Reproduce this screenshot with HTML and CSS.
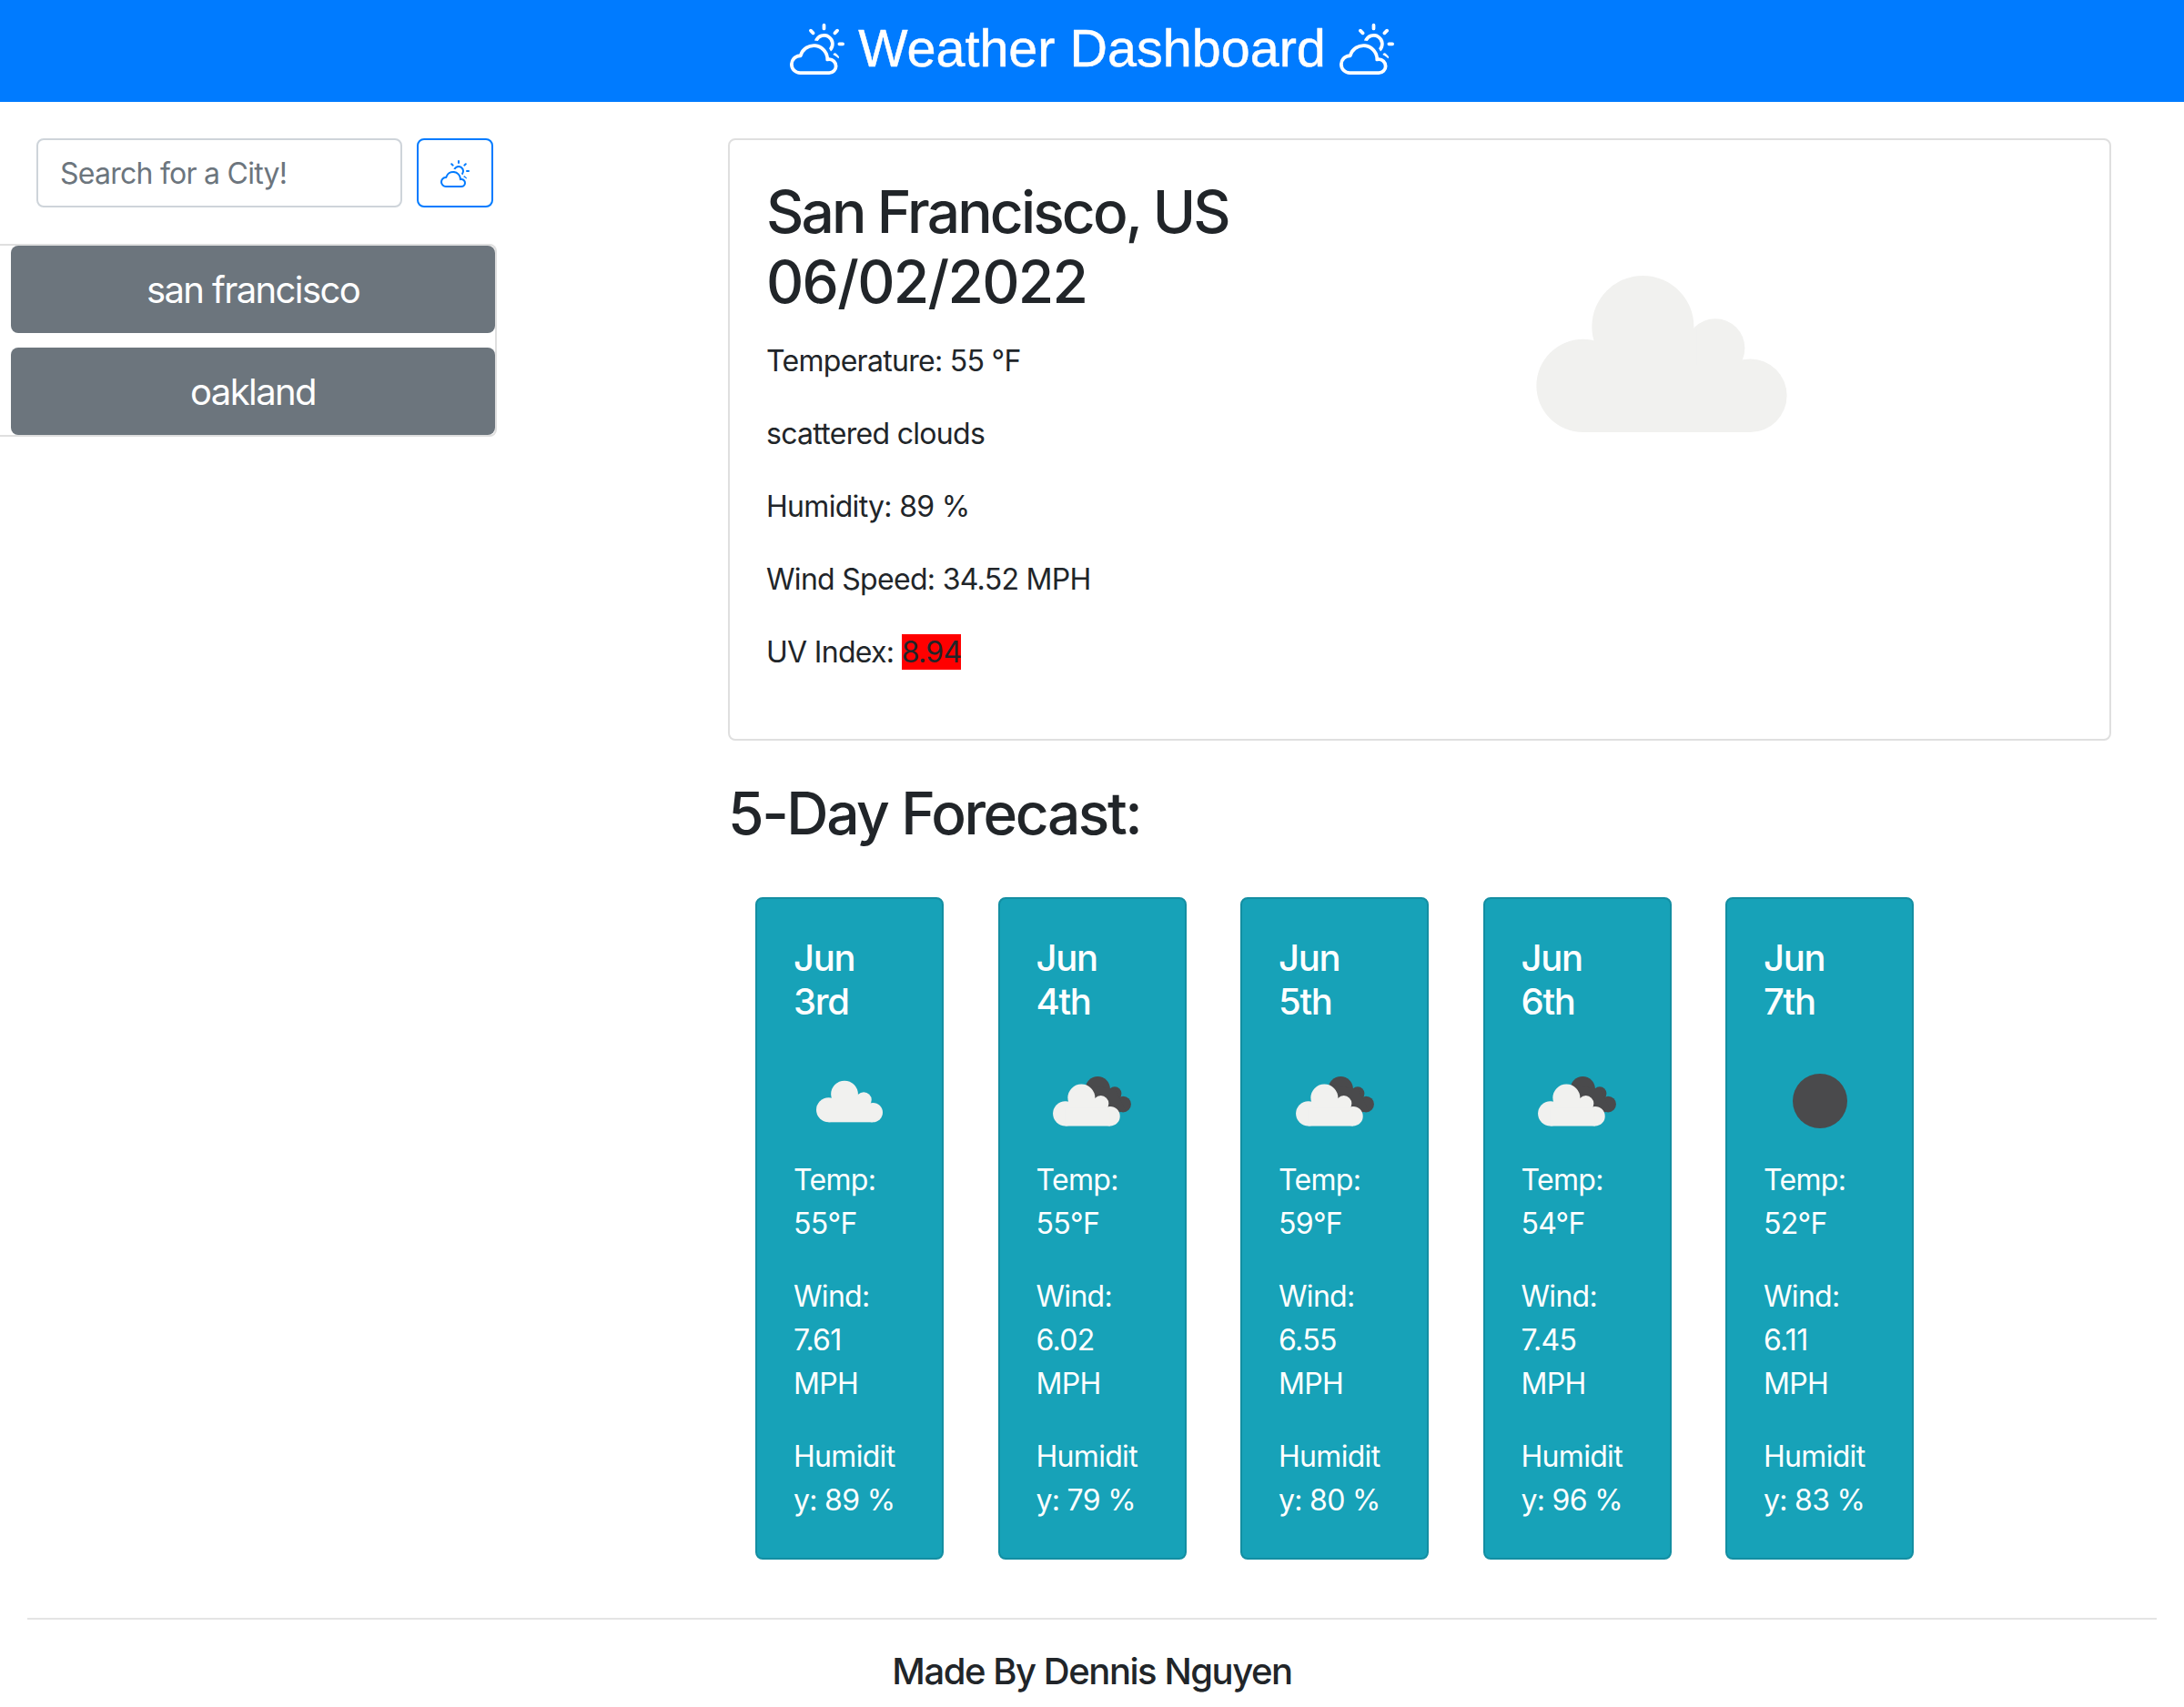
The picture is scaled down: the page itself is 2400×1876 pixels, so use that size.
FILE: index.html
```html
<!DOCTYPE html>
<html lang="en">
<head>
    <meta charset="UTF-8">
    <meta name="viewport" content="width=device-width, initial-scale=1.0">
    <title>Weather Dashboard</title>
    <link rel="stylesheet" href="styles.css">
</head>
<body>
    <svg class="icon-defs" width="0" height="0">
        <symbol id="cloud-sun" viewBox="0 0 16 16">
            <path d="M7 8a3.5 3.5 0 0 1 3.5 3.555.5.5 0 0 0 .624.492A1.503 1.503 0 0 1 13 13.5a1.5 1.5 0 0 1-1.5 1.5H3a2 2 0 1 1 .1-3.998.5.5 0 0 0 .51-.375A3.502 3.502 0 0 1 7 8zm4.473 3a4.5 4.5 0 0 0-8.72-.99A3 3 0 0 0 3 16h8.5a2.5 2.5 0 0 0 0-5h-.027z"/>
            <path d="M10.5 1.5a.5.5 0 0 0-1 0v1a.5.5 0 0 0 1 0v-1zm3.743 1.964a.5.5 0 1 0-.707-.707l-.708.707a.5.5 0 0 0 .708.708l.707-.708zm-7.779-.707a.5.5 0 0 0-.707.707l.707.708a.5.5 0 1 0 .708-.708l-.708-.707zm1.734 3.374a2 2 0 1 1 3.296 2.198c.199.281.372.582.516.898a3 3 0 1 0-4.84-3.225c.352.011.696.055 1.028.129zm4.484 4.074c.6.215 1.125.59 1.522 1.072a.5.5 0 0 0 .039-.742l-.707-.707a.5.5 0 0 0-.854.377zM14.5 6.5a.5.5 0 0 0 0 1h1a.5.5 0 0 0 0-1h-1z"/>
        </symbol>
        <symbol id="cloud" viewBox="0 0 280 175">
            <circle cx="119" cy="57" r="57"/>
            <circle cx="52" cy="123" r="52"/>
            <circle cx="200" cy="81" r="33"/>
            <circle cx="239" cy="134" r="41"/>
            <rect x="119" y="60" width="60" height="50"/>
            <rect x="52" y="100" width="187" height="75"/>
        </symbol>
        <symbol id="clouds" viewBox="0 0 253 162">
            <g class="cloud-back">
                <circle cx="145" cy="40" r="40"/>
                <circle cx="200" cy="55" r="22"/>
                <circle cx="227" cy="90" r="26"/>
                <path d="M120 30 L200 40 L235 110 L170 130 Z"/>
            </g>
            <g class="cloud-front" transform="translate(0 25) scale(.775)">
                <circle cx="119" cy="57" r="57"/>
                <circle cx="52" cy="123" r="52"/>
                <circle cx="200" cy="81" r="33"/>
                <circle cx="239" cy="134" r="41"/>
                <rect x="119" y="60" width="60" height="50"/>
                <rect x="52" y="100" width="187" height="75"/>
            </g>
        </symbol>
    </svg>

    <header class="top-bar">
        <svg class="top-icon"><use href="#cloud-sun"/></svg>
        <h1>Weather Dashboard</h1>
        <svg class="top-icon"><use href="#cloud-sun"/></svg>
    </header>

    <div class="page">
        <aside class="sidebar">
            <form class="search">
                <input type="text" placeholder="Search for a City!">
                <button type="button" class="search-btn"><svg><use href="#cloud-sun"/></svg></button>
            </form>
            <div class="history">
                <button type="button">san francisco</button>
                <button type="button">oakland</button>
            </div>
        </aside>

        <main class="content">
            <section class="today">
                <div class="today-info">
                    <h2>San Francisco, US<br><span class="today-date">06/02/2022</span></h2>
                    <p>Temperature: 55 °F</p>
                    <p>scattered clouds</p>
                    <p>Humidity: 89 %</p>
                    <p>Wind Speed: 34.52 MPH</p>
                    <p>UV Index: <span class="uv">8.94</span></p>
                </div>
                <svg class="today-icon"><use href="#cloud"/></svg>
            </section>

            <h2 class="forecast-title">5-Day Forecast:</h2>

            <div class="forecast">
                <article class="day">
                    <h5>Jun<br>3rd</h5>
                    <div class="day-icon"><svg class="one-cloud"><use href="#cloud"/></svg></div>
                    <p>Temp:<br>55°F</p>
                    <p>Wind:<br>7.61<br>MPH</p>
                    <p>Humidit<br>y: 89 %</p>
                </article>
                <article class="day">
                    <h5>Jun<br>4th</h5>
                    <div class="day-icon"><svg class="two-clouds"><use href="#clouds"/></svg></div>
                    <p>Temp:<br>55°F</p>
                    <p>Wind:<br>6.02<br>MPH</p>
                    <p>Humidit<br>y: 79 %</p>
                </article>
                <article class="day">
                    <h5>Jun<br>5th</h5>
                    <div class="day-icon"><svg class="two-clouds"><use href="#clouds"/></svg></div>
                    <p>Temp:<br>59°F</p>
                    <p>Wind:<br>6.55<br>MPH</p>
                    <p>Humidit<br>y: 80 %</p>
                </article>
                <article class="day">
                    <h5>Jun<br>6th</h5>
                    <div class="day-icon"><svg class="two-clouds"><use href="#clouds"/></svg></div>
                    <p>Temp:<br>54°F</p>
                    <p>Wind:<br>7.45<br>MPH</p>
                    <p>Humidit<br>y: 96 %</p>
                </article>
                <article class="day">
                    <h5>Jun<br>7th</h5>
                    <div class="day-icon"><div class="night"></div></div>
                    <p>Temp:<br>52°F</p>
                    <p>Wind:<br>6.11<br>MPH</p>
                    <p>Humidit<br>y: 83 %</p>
                </article>
            </div>
        </main>
    </div>

    <footer class="footer">
        <h5>Made By Dennis Nguyen</h5>
    </footer>
</body>
</html>
```

FILE: styles.css
```css
* {
    box-sizing: border-box;
}
body {
    margin: 0;
    font-family: Inter, "Liberation Sans", sans-serif;
    font-size: 32px;
    line-height: 48px;
    letter-spacing: -0.7px;
    color: #212529;
    background-color: #fff;
}
h1, h2, h5, p {
    margin: 0;
}
.icon-defs {
    position: absolute;
}

/* header */
.top-bar {
    height: 112px;
    display: flex;
    align-items: center;
    justify-content: center;
    gap: 15px;
    background-color: #007bff;
    color: #fff;
    fill: #fff;
}
.top-bar h1 {
    margin-bottom: 6px;
    font-family: "Liberation Sans", Arial, sans-serif;
    font-size: 57.5px;
    font-weight: 400;
    line-height: 68px;
    letter-spacing: 0;
    -webkit-text-stroke: 0.5px #fff;
}
.top-icon {
    width: 60px;
    height: 60px;
    margin-bottom: 8px;
}

.page {
    display: flex;
    align-items: flex-start;
}

/* left column */
.sidebar {
    width: 800px;
    flex-shrink: 0;
    padding-top: 40px;
}
.search {
    display: flex;
    gap: 16px;
    margin: 0 0 40px 40px;
}
.search input {
    width: 402px;
    height: 76px;
    padding: 0 24px;
    font-family: inherit;
    font-size: 32px;
    letter-spacing: -0.75px;
    color: #495057;
    border: 2px solid #ced4da;
    border-radius: 8px;
}
.search input::placeholder {
    color: #6c757d;
    opacity: 1;
}
.search-btn {
    width: 84px;
    height: 76px;
    padding: 0;
    display: flex;
    align-items: center;
    justify-content: center;
    background-color: #fff;
    border: 2px solid #007bff;
    border-radius: 8px;
    fill: #007bff;
}
.search-btn svg {
    width: 32px;
    height: 32px;
}
.history {
    width: 546px;
    display: flex;
    flex-direction: column;
    gap: 16px;
    padding: 0 0 0 12px;
    border: 2px solid #dfdfdf;
    border-left: 0;
    border-radius: 0 8px 8px 0;
}
.history button {
    height: 96px;
    font-family: inherit;
    font-size: 40px;
    letter-spacing: -1.6px;
    color: #fff;
    background-color: #6c757d;
    border: 0;
    border-radius: 8px;
}

/* right column */
.content {
    width: 1520px;
    padding-top: 40px;
}
.today {
    height: 662px;
    display: flex;
    padding: 41px 40px 0;
    border: 2px solid #dfdfdf;
    border-radius: 8px;
}
.today-info {
    width: 846px;
}
.today-info h2 {
    margin-bottom: 24px;
    letter-spacing: -2.85px;
}
.today-info p {
    margin-bottom: 32px;
}
h2 {
    font-size: 64px;
    font-weight: 500;
    line-height: 76.8px;
    letter-spacing: -2.4px;
}
.today-info .today-date {
    letter-spacing: -1.7px;
}
.today-icon {
    width: 276px;
    height: 172px;
    margin-top: 108px;
    fill: #f1f1ef;
}
.uv {
    background-color: #ff0000;
}
.forecast-title {
    margin-top: 42px;
}
.forecast {
    display: flex;
    gap: 59.5px;
    margin: 53px 0 0 30px;
}
.day {
    width: 207px;
    height: 728px;
    padding: 41.5px 40px 0;
    color: #fff;
    background-color: #17a2b8;
    border: 2px solid #138ea2;
    border-radius: 8px;
}
.day h5 {
    font-weight: 500;
    font-size: 40px;
    line-height: 48px;
    letter-spacing: -1.3px;
}
.day p {
    margin-bottom: 32px;
}
.day p:last-child {
    margin-bottom: 0;
}
.day-icon {
    height: 120px;
    margin: 25px -40px 3px;
    display: flex;
    align-items: center;
    justify-content: center;
}
.one-cloud {
    width: 73px;
    height: 47px;
    fill: #f1f1ef;
}
.two-clouds {
    width: 86px;
    height: 55px;
}
.cloud-back {
    fill: #4a4a4c;
}
.cloud-front {
    fill: #f1f1ef;
}
.night {
    width: 60px;
    height: 60px;
    border-radius: 50%;
    background-color: #4a4a4c;
}

/* footer */
.footer {
    margin: 64px 30px 0;
    padding-top: 33px;
    border-top: 2px solid #e4e4e4;
    text-align: center;
}
.footer h5 {
    font-size: 40px;
    font-weight: 500;
    line-height: 48px;
    letter-spacing: -1.45px;
}
```
